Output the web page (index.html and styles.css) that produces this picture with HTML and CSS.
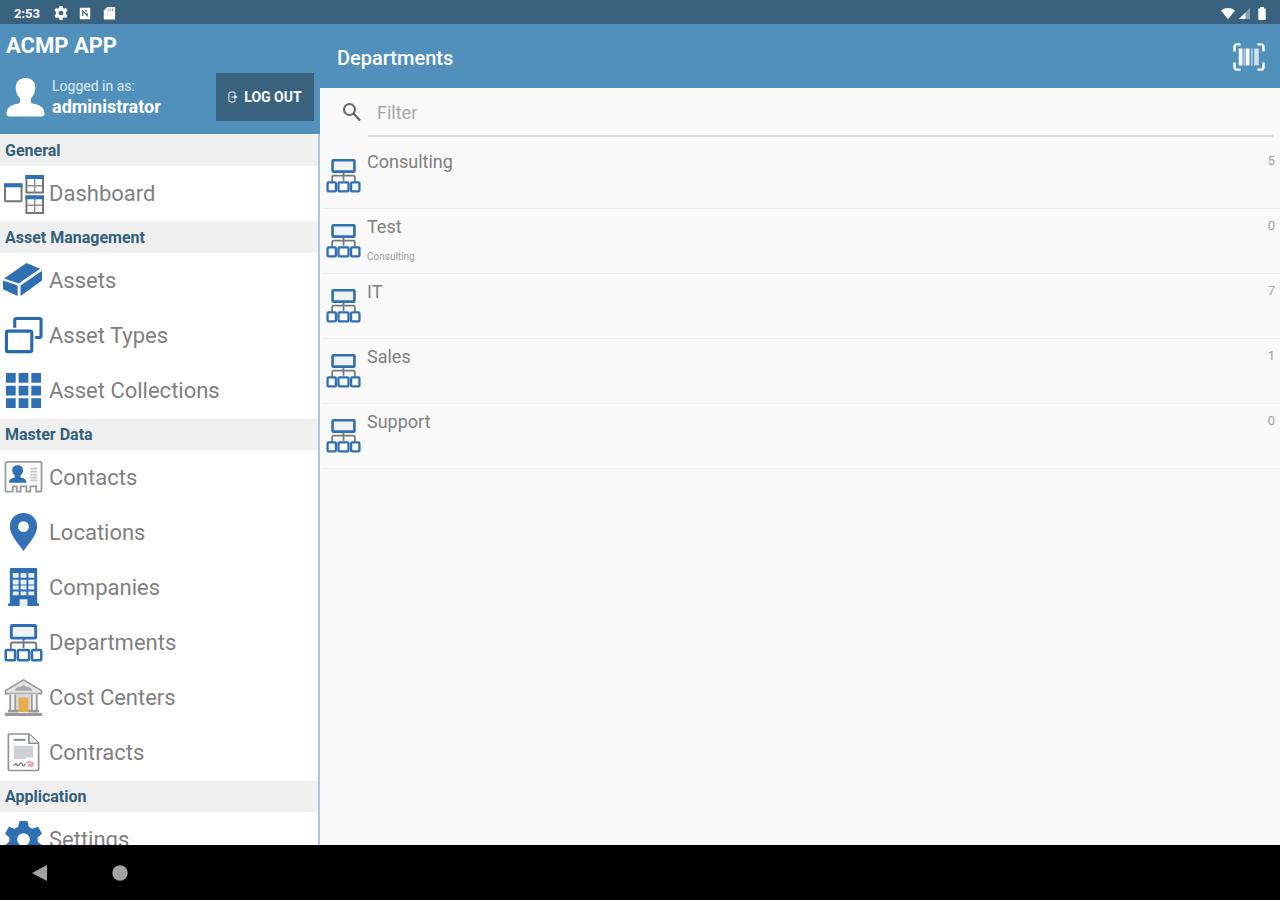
FILE: index.html
```html
<!DOCTYPE html>
<html lang="en">
<head>
<meta charset="utf-8">
<meta name="viewport" content="width=device-width, initial-scale=1">
<title>ACMP App – Departments</title>
<link rel="stylesheet" href="styles.css">
</head>
<body>
<svg class="sprite" aria-hidden="true">
  <symbol id="org" viewBox="0 0 40 40">
    <path d="M20 16v10M7 27v-5q0-2 2-2h22q2 0 2 2v5" fill="none" stroke="#77797c" stroke-width="2"/>
    <rect x="7.500" y="2.500" width="25" height="13" rx="1" fill="#f1f2f4" stroke="#2f6fb3" stroke-width="3"/>
    <g fill="#fff" stroke="#2f6fb3" stroke-width="2.600"><rect x="1.800" y="27.800" width="9.500" height="10.400" rx="1"/><rect x="14.300" y="27.800" width="11.400" height="10.400" rx="1"/><rect x="28.700" y="27.800" width="9.500" height="10.400" rx="1"/></g>
  </symbol>
</svg>
<div class="device">
  <div class="status">
    <div class="status-group">
      <span class="clock">2:53</span>
      <svg class="status-icon" viewBox="0 0 16 16"><path fill="#fff" fill-rule="evenodd" d="M6.400 0h3.200l.6 2.200 1.400.8 2.200-.6L15.400 5.200l-1.600 1.700v2.200l1.600 1.700-1.600 2.800-2.200-.6-1.400.8-.6 2.200H6.400l-.6-2.200-1.400-.8-2.200.6L.6 10.800l1.600-1.700V6.900L.6 5.200l1.600-2.800 2.200.6 1.400-.8zM8 5.300a2.700 2.700 0 1 0 0 5.400 2.700 2.700 0 0 0 0-5.400z"/></svg>
      <svg class="status-icon" viewBox="0 0 16 16"><rect x="2" y="2" width="12" height="13" rx="1" fill="#fff"/><path d="M5.500 11.500V5.500l5 5.500V8M8 5.500h2.500" fill="none" stroke="#39627f" stroke-width="1.300"/></svg>
      <svg class="status-icon" viewBox="0 0 16 16"><path d="M6 1h8q1 0 1 1v12.500q0 1-1 1H3q-1 0-1-1V5z" fill="#fff"/><path d="M7 3v2.500M9.500 3v2.500M12 3v2.500" stroke="#39627f" stroke-width=".8"/></svg>
    </div>
    <div class="status-group status-right">
      <svg class="wifi" viewBox="0 0 18 14"><path d="M1 3.500Q9-2 17 3.500L9 13.500z" fill="#fff"/></svg>
      <svg class="signal" viewBox="0 0 12 12"><path d="M12 0v12H0z" fill="#84a0b4"/><path d="M7 5v7H0z" fill="#fff"/></svg>
      <svg class="battery" viewBox="0 0 10 14"><path d="M3 0h4v1.500h1.500q.5 0 .5.5v11q0 1-1 1H2q-1 0-1-1V2q0-.5.500-.5H3z" fill="#fff"/></svg>
    </div>
  </div>

  <div class="app">
    <aside class="side">
      <header class="side-head">
        <div class="brand">ACMP APP</div>
        <div class="account">
          <svg class="avatar" viewBox="0 0 40 40"><path fill="#fff" d="M20 0c6.500 0 10 4 10 10 0 5-2 8.500-4.500 11v3c0 1.500 1 2 3 2.500 6 1.300 11 3.500 11 10.500 0 1.700-1 2.500-3 2.500h-33c-2 0-3-.8-3-2.500 0-7 5-9.200 11-10.500 2-.5 3-1 3-2.500v-3C12 18.500 10 15 10 10 10 4 13.500 0 20 0z"/></svg>
          <div class="who"><span class="who-label">Logged in as:</span><span class="who-name">administrator</span></div>
          <button class="logout" type="button">
            <svg class="logout-icon" viewBox="0 0 12 14"><path d="M8.500 4V3Q8.500 1 6.500 1H4Q1 1 1 4v6q0 3 3 3h2.500q2 0 2-2v-1M4 7h5" fill="none" stroke="#e4ecf1" stroke-width="1.300"/><path d="M7.500 4 11.500 7l-4 3z" fill="#e4ecf1"/></svg>
            LOG OUT
          </button>
        </div>
      </header>

      <nav class="menu">
        <h2 class="section">General</h2>
        <a class="item" href="#"><svg class="item-icon" viewBox="0 0 40 40"><g fill="#fff" stroke="#717477" stroke-width="2"><rect x="1" y="11" width="17" height="17" rx="1"/><rect x="23" y="2" width="17" height="17"/><rect x="23" y="23" width="17" height="17"/></g><path d="M31.500 4v15M24 12h15M31.500 25v15M24 32h15" stroke="#8b8e91" stroke-width="1.500"/><path d="M0 11.500h19M22 3h19M22 24h19" stroke="#2f6fb3" stroke-width="4"/></svg>Dashboard</a>

        <h2 class="section">Asset Management</h2>
        <a class="item" href="#"><svg class="item-icon" viewBox="0 0 40 40"><g fill="#2f6fb3"><path d="M0 18 23 2l14 6-22 15z"/><path d="M-1 20 14 25v11L-1 29z"/><path d="M17 25 39 10v10L17 36z"/></g></svg>Assets</a>
        <a class="item" href="#"><svg class="item-icon" viewBox="0 0 40 40"><g fill="none" stroke="#2869ad" stroke-width="3.200"><path d="M11 12V4q0-1.500 1.500-1.500h24Q38 2.500 38 4v16.500q0 1.500-1.500 1.500H32"/><rect x="2.500" y="15.500" width="26" height="21" rx="1.500"/></g></svg>Asset Types</a>
        <a class="item" href="#"><svg class="item-icon" viewBox="0 0 40 40"><path fill="#2f6fb3" d="M2 2h10v10H2zM15 2h10v10H15zM28 2h10v10H28zM2 15h10v10H2zM15 15h10v10H15zM28 15h10v10H28zM2 28h10v10H2zM15 28h10v10H15zM28 28h10v10H28z"/></svg>Asset Collections</a>

        <h2 class="section">Master Data</h2>
        <a class="item" href="#"><svg class="item-icon" viewBox="0 0 40 40"><path d="M3 4h34q1.500 0 1.500 1.500V33q0 1.500-1.500 1.500h-4V29h-6v5.500h-4V29h-6v5.500h-4V29H9v5.500H3Q1.500 34.500 1.500 33V5.500Q1.500 4 3 4z" fill="#fcfcfc" stroke="#97999b" stroke-width="1.800"/><path d="M14 7.500c3.500 0 5.500 2 5.500 5 0 2.500-1 4-2.500 5.500v2q6 1 6 5.500H5q0-4.500 6-5.500v-2c-1.500-1.500-2.500-3-2.500-5.500 0-3 2-5 5.500-5z" fill="#2f6fb3"/><path d="M27 11h7M27 14h7M27 17h7M27 20h7M27 23h7" stroke="#c5c7c9" stroke-width="1.800"/></svg>Contacts</a>
        <a class="item" href="#"><svg class="item-icon" viewBox="0 0 40 40"><path fill="#3572b5" fill-rule="evenodd" d="M20 0c8 0 14 6 14 13.500C34 22 27 29 20 39 13 29 6 22 6 13.500 6 6 12 0 20 0zm0 8.500a5.500 5.500 0 1 0 0 11 5.500 5.500 0 0 0 0-11z"/></svg>Locations</a>
        <a class="item" href="#"><svg class="item-icon" viewBox="0 0 40 40"><path fill="#2f6fb3" d="M6 0h28v36l2 1v2H4v-2l2-1z"/><path fill="#e9f1f8" d="M9 5h6v5H9zM17 5h6v5h-6zM25 5h6v5h-6zM9 12h6v5H9zM17 12h6v5h-6zM25 12h6v5h-6zM9 18h6v4H9zM17 18h6v4h-6zM25 18h6v4h-6zM9 24h6v4H9zM17 24h6v4h-6zM25 24h6v4h-6zM16 32h8v7h-8z"/></svg>Companies</a>
        <a class="item" href="#"><svg class="item-icon"><use href="#org"/></svg>Departments</a>
        <a class="item" href="#"><svg class="item-icon" viewBox="0 0 40 40"><path d="M1.500 13 20 2 38.500 13v3h-37z" fill="#e3e3e3" stroke="#929497" stroke-width="1.600"/><path d="M11 13q1-4 6-4l3-2 3 2q5 0 6 4z" fill="#a7a9ab"/><path d="M5 16h30v18H5z" fill="#d5d6d7"/><path d="M6.500 17v17M11.500 17v17M28.500 17v17M33.500 17v17" stroke="#999b9d" stroke-width="1.600"/><path d="M9 17v17M31 17v17" stroke="#f4f4f4" stroke-width="2.500"/><path d="M15 20h10v15H15z" fill="#e9ac4d"/><path d="M4 34h11M25 34h11M1 37.500h38" stroke="#97999b" stroke-width="3"/></svg>Cost Centers</a>
        <a class="item" href="#"><svg class="item-icon" viewBox="0 0 40 40"><path d="M5.500 1H26l9.500 9v27.500q0 1-1 1h-29q-1 0-1-1V2q0-1 1-1z" fill="#fff" stroke="#909294" stroke-width="1.700"/><path d="M25.500 1v9.500h10" fill="#eee" stroke="#909294" stroke-width="1.700"/><path d="M10 7h12" stroke="#85888b" stroke-width="2"/><path d="M10 13h20v12h-8v2H10z" fill="#cfd1d2"/><path d="M10 33.500q2-3 3-1t3-.5 3 .5 3-1" fill="none" stroke="#85888b" stroke-width="1.600"/><path d="M23 31q3-3 7 0-3 5-5 2 3-2 5 1" fill="none" stroke="#f0a8b0" stroke-width="2"/></svg>Contracts</a>

        <h2 class="section">Application</h2>
        <a class="item" href="#"><svg class="item-icon" viewBox="0 0 40 40"><path fill="#2f6fb3" fill-rule="evenodd" d="M16 1h8l1.500 6 3.500 2 6-2 4 7-4.500 4v4l4.500 4-4 7-6-2-3.500 2L24 39h-8l-1.500-6-3.500-2-6 2-4-7 4.500-4v-4L1 14l4-7 6 2 3.500-2zM20 13.500a6.500 6.500 0 1 0 0 13 6.500 6.500 0 0 0 0-13z"/></svg>Settings</a>
      </nav>
    </aside>

    <main class="main">
      <header class="main-head">
        <h1 class="title">Departments</h1>
        <button class="scan" type="button" aria-label="Scan barcode">
          <svg class="scan-icon" viewBox="0 0 34 30"><path d="M1.500 9V4q0-2.500 2.500-2.500h4M26 1.500h4q2.500 0 2.500 2.500v5M32.500 21v5q0 2.500-2.500 2.500h-4M8 28.500H4q-2.500 0-2.500-2.500v-5" fill="none" stroke="#fff" stroke-width="2.600"/><path d="M8 6v18M15.500 6v18" stroke="#fff" stroke-width="4"/><path d="M12 6v18M20 6v18" stroke="#a9c8dd" stroke-width="2"/><path d="M25 6v18" stroke="#cfe0eb" stroke-width="5"/></svg>
        </button>
      </header>
      <div class="search">
        <svg class="search-icon" viewBox="0 0 20 20"><circle cx="7.500" cy="6.500" r="5.500" fill="none" stroke="#666" stroke-width="2"/><path d="m11.500 10.500 6.500 7" stroke="#666" stroke-width="2.400"/></svg>
        <input class="filter" type="text" placeholder="Filter" aria-label="Filter">
      </div>
      <ul class="list">
        <li class="row"><svg class="row-icon"><use href="#org"/></svg><div class="row-text"><span class="row-name">Consulting</span></div><span class="count">5</span></li>
        <li class="row"><svg class="row-icon"><use href="#org"/></svg><div class="row-text"><span class="row-name">Test</span><span class="row-sub">Consulting</span></div><span class="count">0</span></li>
        <li class="row"><svg class="row-icon"><use href="#org"/></svg><div class="row-text"><span class="row-name">IT</span></div><span class="count">7</span></li>
        <li class="row"><svg class="row-icon"><use href="#org"/></svg><div class="row-text"><span class="row-name">Sales</span></div><span class="count">1</span></li>
        <li class="row"><svg class="row-icon"><use href="#org"/></svg><div class="row-text"><span class="row-name">Support</span></div><span class="count">0</span></li>
      </ul>
    </main>
  </div>

  <div class="navbar">
    <button class="nav-button" type="button" aria-label="Back"><svg class="nav-icon" viewBox="0 0 16 18"><path d="M0 9 15 1v16z" fill="#a3a3a3"/></svg></button>
    <button class="nav-button" type="button" aria-label="Home"><svg class="nav-icon" viewBox="0 0 16 18"><circle cx="8" cy="9" r="7.700" fill="#a3a3a3"/></svg></button>
  </div>
</div>
</body>
</html>
```
FILE: styles.css
```css
* { box-sizing: border-box; }
body { margin: 0; font-family: Roboto, "Liberation Sans", sans-serif; color: #7f7f7f; }
button { border: 0; background: none; padding: 0; font: inherit; color: inherit; cursor: pointer; }
svg { display: block; flex: none; overflow: visible; }
.sprite { position: absolute; width: 0; height: 0; }
.device { display: flex; flex-direction: column; height: 100vh; background: #fafafa; }

.status { display: flex; justify-content: space-between; align-items: center; flex: none; height: 24px; padding: 2px 13px 0 14px; background: #39627f; color: #fff; }
.status-group { display: flex; align-items: center; gap: 10px; }
.status-right { gap: 3px; }
.clock { margin-right: 4px; font-size: 13px; font-weight: 700; }
.status-icon { width: 14px; height: 14px; }
.wifi { width: 16px; height: 13px; }
.signal { width: 11px; height: 11px; margin-right: 4px; }
.battery { width: 10px; height: 13px; }

.app { display: flex; flex: 1; min-height: 0; }
.side { display: flex; flex-direction: column; flex: none; width: 320px; background: #fff; border-right: 2px solid #adc5de; }
.side-head { flex: none; height: 110px; margin-right: -2px; padding: 9px 6px 0; background: #5190bb; color: #fff; }
.brand { font-size: 22px; line-height: 26px; font-weight: 700; }
.account { display: flex; align-items: center; gap: 7px; padding-top: 14px; }
.avatar { width: 39px; height: 39px; }
.who { display: flex; flex-direction: column; flex: 1; }
.who-label { font-size: 14px; line-height: 20px; color: #deebf3; }
.who-name { font-size: 18px; line-height: 22px; font-weight: 700; }
.logout { display: flex; align-items: center; justify-content: center; gap: 6px; width: 98px; height: 48px; background: #39627f; font-size: 14px; font-weight: 700; }
.logout-icon { width: 10px; height: 12px; }

.menu { flex: 1; min-height: 0; overflow: hidden; }
.section { margin: 0; padding: 1px 5px 0; background: #efefef; border-top: 1px solid #f7f7f7; color: #315f7c; font-size: 16px; line-height: 30px; font-weight: 700; }
.item { display: flex; align-items: center; gap: 6px; height: 55px; padding-left: 4px; color: #7f7f7f; font-size: 22px; text-decoration: none; }
.item-icon { width: 39px; height: 39px; }

.main { flex: 1; min-width: 0; }
.main-head { display: flex; align-items: center; justify-content: space-between; height: 64px; padding: 2px 14px 0 17px; background: #5190bb; color: #fff; }
.title { margin: 0; padding-top: 2px; font-size: 20px; line-height: 28px; font-weight: 500; }
.scan-icon { width: 34px; height: 28px; }
.search { display: flex; align-items: center; height: 56px; padding: 0 7px 7px 22px; }
.search-icon { width: 20px; height: 20px; margin-right: 6px; }
.filter { flex: 1; min-width: 0; height: 49px; padding: 2px 9px 0; border: 0; border-bottom: 2px solid #dcdcdc; background: none; outline: 0; color: #7f7f7f; font: inherit; font-size: 18px; }
.filter::placeholder { color: #a6a6a6; opacity: 1; }
.list { margin: 0; padding: 0 0 0 2px; list-style: none; }
.row { display: flex; height: 65px; padding: 5px 5px 0 4px; border-bottom: 1px solid #eee; }
.row-icon { width: 35px; height: 35px; margin-top: 9px; }
.row-text { display: flex; flex-direction: column; flex: 1; padding-left: 6px; }
.row-name { font-size: 18px; line-height: 26px; }
.row-sub { padding-top: 9px; font-size: 10px; line-height: 16px; color: #9b9b9b; }
.count { font-size: 13px; line-height: 24px; color: #a0a0a0; }

.navbar { display: flex; align-items: center; flex: none; height: 55px; background: #000; }
.nav-button { display: flex; justify-content: center; width: 80px; }
.nav-icon { width: 16px; height: 18px; }
```
